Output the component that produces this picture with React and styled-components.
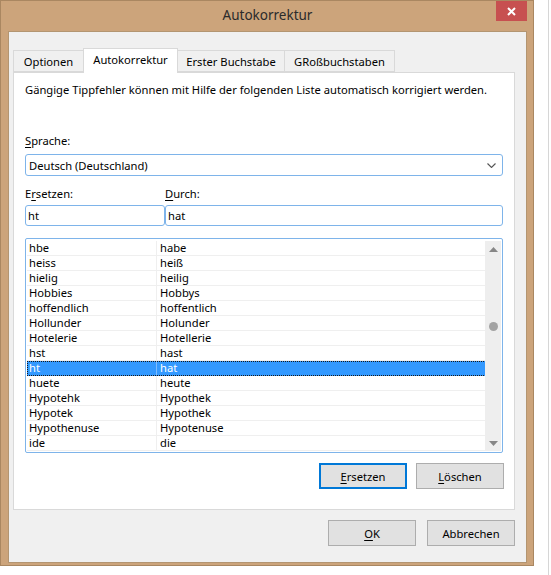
import React from "react";
import styled, { createGlobalStyle } from "styled-components";

const GlobalStyle = createGlobalStyle`
  html, body {
    margin: 0;
    padding: 0;
    background: #ffffff;
  }
  body {
    font-family: "Noto Sans", "DejaVu Sans", sans-serif;
    font-size: 11.2px;
    color: #000000;
  }
`;

const Screen = styled.div`
  display: flex;
  width: 551px;
  height: 575px;
  overflow: hidden;
  background: #ffffff;
`;

const Window = styled.div`
  width: 534px;
  height: 566px;
  box-sizing: border-box;
  background: #cca47b;
  border: 1px solid #aa8761;
  padding: 0 6px 2px 7px;
  display: flex;
  flex-direction: column;
`;

const TitleBar = styled.div`
  height: 30px;
  display: grid;
  grid-template-columns: 1fr auto 1fr;
  align-items: start;
`;

const Title = styled.div`
  grid-column: 2;
  line-height: 28px;
  font-size: 13.5px;
  color: #2b2b2b;
`;

const CloseButton = styled.div`
  grid-column: 3;
  justify-self: end;
  width: 31px;
  height: 20px;
  background: #c75050;
  display: flex;
  align-items: center;
  justify-content: center;
`;

const Client = styled.div`
  flex: 1;
  box-sizing: border-box;
  background: #f0f0f0;
  border: 1px solid #b39571;
  padding: 16px 11px 0 4px;
  display: flex;
  flex-direction: column;
`;

const TabStrip = styled.div`
  display: flex;
  align-items: flex-end;
  height: 24px;
  position: relative;
  z-index: 1;
`;

const Tab = styled.div`
  box-sizing: border-box;
  width: ${(p) => p.$w}px;
  height: ${(p) => (p.$active ? 25 : 22)}px;
  margin-right: -1px;
  margin-bottom: ${(p) => (p.$active ? -1 : 0)}px;
  border: 1px solid #d9d9d9;
  border-bottom: ${(p) => (p.$active ? "none" : "1px solid #d9d9d9")};
  background: ${(p) => (p.$active ? "#ffffff" : "#f0f0f0")};
  display: flex;
  align-items: center;
  justify-content: center;
  padding-bottom: ${(p) => (p.$active ? 3 : 0)}px;
  white-space: nowrap;
`;

const Panel = styled.div`
  box-sizing: border-box;
  height: 438px;
  background: #ffffff;
  border: 1px solid #d9d9d9;
  padding: 9px 11px 0 11px;
  display: flex;
  flex-direction: column;
`;

const Description = styled.div`
  line-height: 16px;
  white-space: nowrap;
`;

const Label = styled.div`
  line-height: 16px;
  margin-top: ${(p) => p.$top}px;
  white-space: nowrap;
`;

const Key = styled.span`
  text-decoration: underline;
  text-underline-offset: 2px;
`;

const Select = styled.div`
  box-sizing: border-box;
  height: 22px;
  margin-top: 5px;
  border: 1px solid #7eb4ea;
  border-radius: 3px;
  padding: 0 6px 0 3px;
  display: flex;
  align-items: center;
  justify-content: space-between;
`;

const FieldGrid = styled.div`
  display: grid;
  grid-template-columns: 140px 1fr;
  margin-top: ${(p) => p.$top}px;
`;

const Input = styled.div`
  box-sizing: border-box;
  height: 21px;
  border: 1px solid #7eb4ea;
  border-radius: 3px;
  padding: 0 2px;
  display: flex;
  align-items: center;
`;

const ListBox = styled.div`
  box-sizing: border-box;
  height: 215px;
  margin-top: 12px;
  border: 1px solid #7eb4ea;
  border-radius: 2px;
  padding: 2px 1px 1px 1px;
  display: flex;
`;

const Rows = styled.div`
  flex: 1;
  display: flex;
  flex-direction: column;
`;

const Row = styled.div`
  box-sizing: border-box;
  height: 15px;
  display: grid;
  grid-template-columns: 130px 1fr;
  background: ${(p) => (p.$selected ? "#3399ff" : "transparent")};
  color: ${(p) => (p.$selected ? "#ffffff" : "#000000")};
  border-bottom: 1px solid ${(p) => (p.$selected ? "#3399ff" : "#efefef")};
  outline: ${(p) => (p.$selected ? "1px dotted #1a1a1a" : "none")};
  outline-offset: -1px;
  margin-right: ${(p) => (p.$selected ? -1 : 0)}px;
`;

const Cell = styled.div`
  line-height: 14px;
  padding-left: ${(p) => (p.$first ? 2 : 3)}px;
  border-right: ${(p) => (p.$first ? "1px solid #efefef" : "none")};
  border-color: ${(p) => (p.$selected ? "#7dbcff" : "#efefef")};
  white-space: nowrap;
  overflow: hidden;
`;

const ScrollBar = styled.div`
  width: 16px;
  background: #eeeeee;
  display: flex;
  flex-direction: column;
`;

const ArrowCell = styled.div`
  height: 16px;
  display: flex;
  align-items: center;
  justify-content: center;
`;

const Track = styled.div`
  flex: 1;
  display: flex;
  flex-direction: column;
  align-items: center;
`;

const Thumb = styled.div`
  width: 9px;
  height: 9px;
  border-radius: 50%;
  background: #a3a3a3;
`;

const ButtonRow = styled.div`
  display: flex;
  justify-content: flex-end;
  gap: ${(p) => p.$gap}px;
  margin-top: ${(p) => p.$top}px;
  margin-right: ${(p) => p.$right || 0}px;
`;

const Button = styled.div`
  box-sizing: border-box;
  width: 88px;
  height: 26px;
  background: #e1e1e1;
  border: 1px solid ${(p) => (p.$default ? "#0078d7" : "#adadad")};
  box-shadow: ${(p) => (p.$default ? "inset 0 0 0 1px #0078d7" : "none")};
  display: flex;
  align-items: center;
  justify-content: center;
  white-space: nowrap;
`;

const Gutter = styled.div`
  flex: 1;
  display: flex;
  justify-content: flex-end;
  padding-right: 2px;
`;

const Rule = styled.div`
  width: 1px;
  background: #d6d6d6;
`;

const tabs = [
  { label: "Optionen", w: 71 },
  { label: "Autokorrektur", w: 95, active: true },
  { label: "Erster Buchstabe", w: 108 },
  { label: "GRoßbuchstaben", w: 111 },
];

const entries = [
  ["hbe", "habe"],
  ["heiss", "heiß"],
  ["hielig", "heilig"],
  ["Hobbies", "Hobbys"],
  ["hoffendlich", "hoffentlich"],
  ["Hollunder", "Holunder"],
  ["Hotelerie", "Hotellerie"],
  ["hst", "hast"],
  ["ht", "hat"],
  ["huete", "heute"],
  ["Hypotehk", "Hypothek"],
  ["Hypotek", "Hypothek"],
  ["Hypothenuse", "Hypotenuse"],
  ["ide", "die"],
];

const selected = "ht";

export default function App() {
  return (
    <>
      <GlobalStyle />
      <Screen>
        <Window>
          <TitleBar>
            <Title>Autokorrektur</Title>
            <CloseButton>
              <svg width="9" height="9" viewBox="0 0 9 9">
                <path d="M1 1 L8 8 M8 1 L1 8" stroke="#ffffff" strokeWidth="2" />
              </svg>
            </CloseButton>
          </TitleBar>
          <Client>
            <TabStrip>
              {tabs.map((t) => (
                <Tab key={t.label} $w={t.w} $active={t.active}>
                  {t.label}
                </Tab>
              ))}
            </TabStrip>
            <Panel>
              <Description>
                Gängige Tippfehler können mit Hilfe der folgenden Liste automatisch korrigiert werden.
              </Description>
              <Label $top={35}>
                <Key>S</Key>prache:
              </Label>
              <Select>
                <span>Deutsch (Deutschland)</span>
                <svg width="9" height="5" viewBox="0 0 9 5">
                  <path d="M0.5 0.5 L4.5 4.5 L8.5 0.5" fill="none" stroke="#555555" strokeWidth="1.1" />
                </svg>
              </Select>
              <FieldGrid $top={10}>
                <Label $top={0}>
                  E<Key>r</Key>setzen:
                </Label>
                <Label $top={0}>
                  <Key>D</Key>urch:
                </Label>
              </FieldGrid>
              <FieldGrid $top={3}>
                <Input>ht</Input>
                <Input>hat</Input>
              </FieldGrid>
              <ListBox>
                <Rows>
                  {entries.map(([from, to]) => {
                    const sel = from === selected;
                    return (
                      <Row key={from} $selected={sel}>
                        <Cell $first $selected={sel}>
                          {from}
                        </Cell>
                        <Cell $selected={sel}>{to}</Cell>
                      </Row>
                    );
                  })}
                </Rows>
                <ScrollBar>
                  <ArrowCell>
                    <svg width="9" height="5" viewBox="0 0 9 5">
                      <path d="M0 5 L4.5 0 L9 5 Z" fill="#868686" />
                    </svg>
                  </ArrowCell>
                  <Track>
                    <Thumb style={{ marginTop: 65 }} />
                  </Track>
                  <ArrowCell>
                    <svg width="9" height="5" viewBox="0 0 9 5">
                      <path d="M0 0 L4.5 5 L9 0 Z" fill="#868686" />
                    </svg>
                  </ArrowCell>
                </ScrollBar>
              </ListBox>
              <ButtonRow $gap={9} $top={10} $right={-1}>
                <Button $default>
                  <span>
                    <Key>E</Key>rsetzen
                  </span>
                </Button>
                <Button>
                  <span>
                    <Key>L</Key>öschen
                  </span>
                </Button>
              </ButtonRow>
            </Panel>
            <ButtonRow $gap={11} $top={10} $right={0}>
              <Button>
                <span>
                  <Key>O</Key>K
                </span>
              </Button>
              <Button>Abbrechen</Button>
            </ButtonRow>
          </Client>
        </Window>
        <Gutter>
          <Rule />
        </Gutter>
      </Screen>
    </>
  );
}
